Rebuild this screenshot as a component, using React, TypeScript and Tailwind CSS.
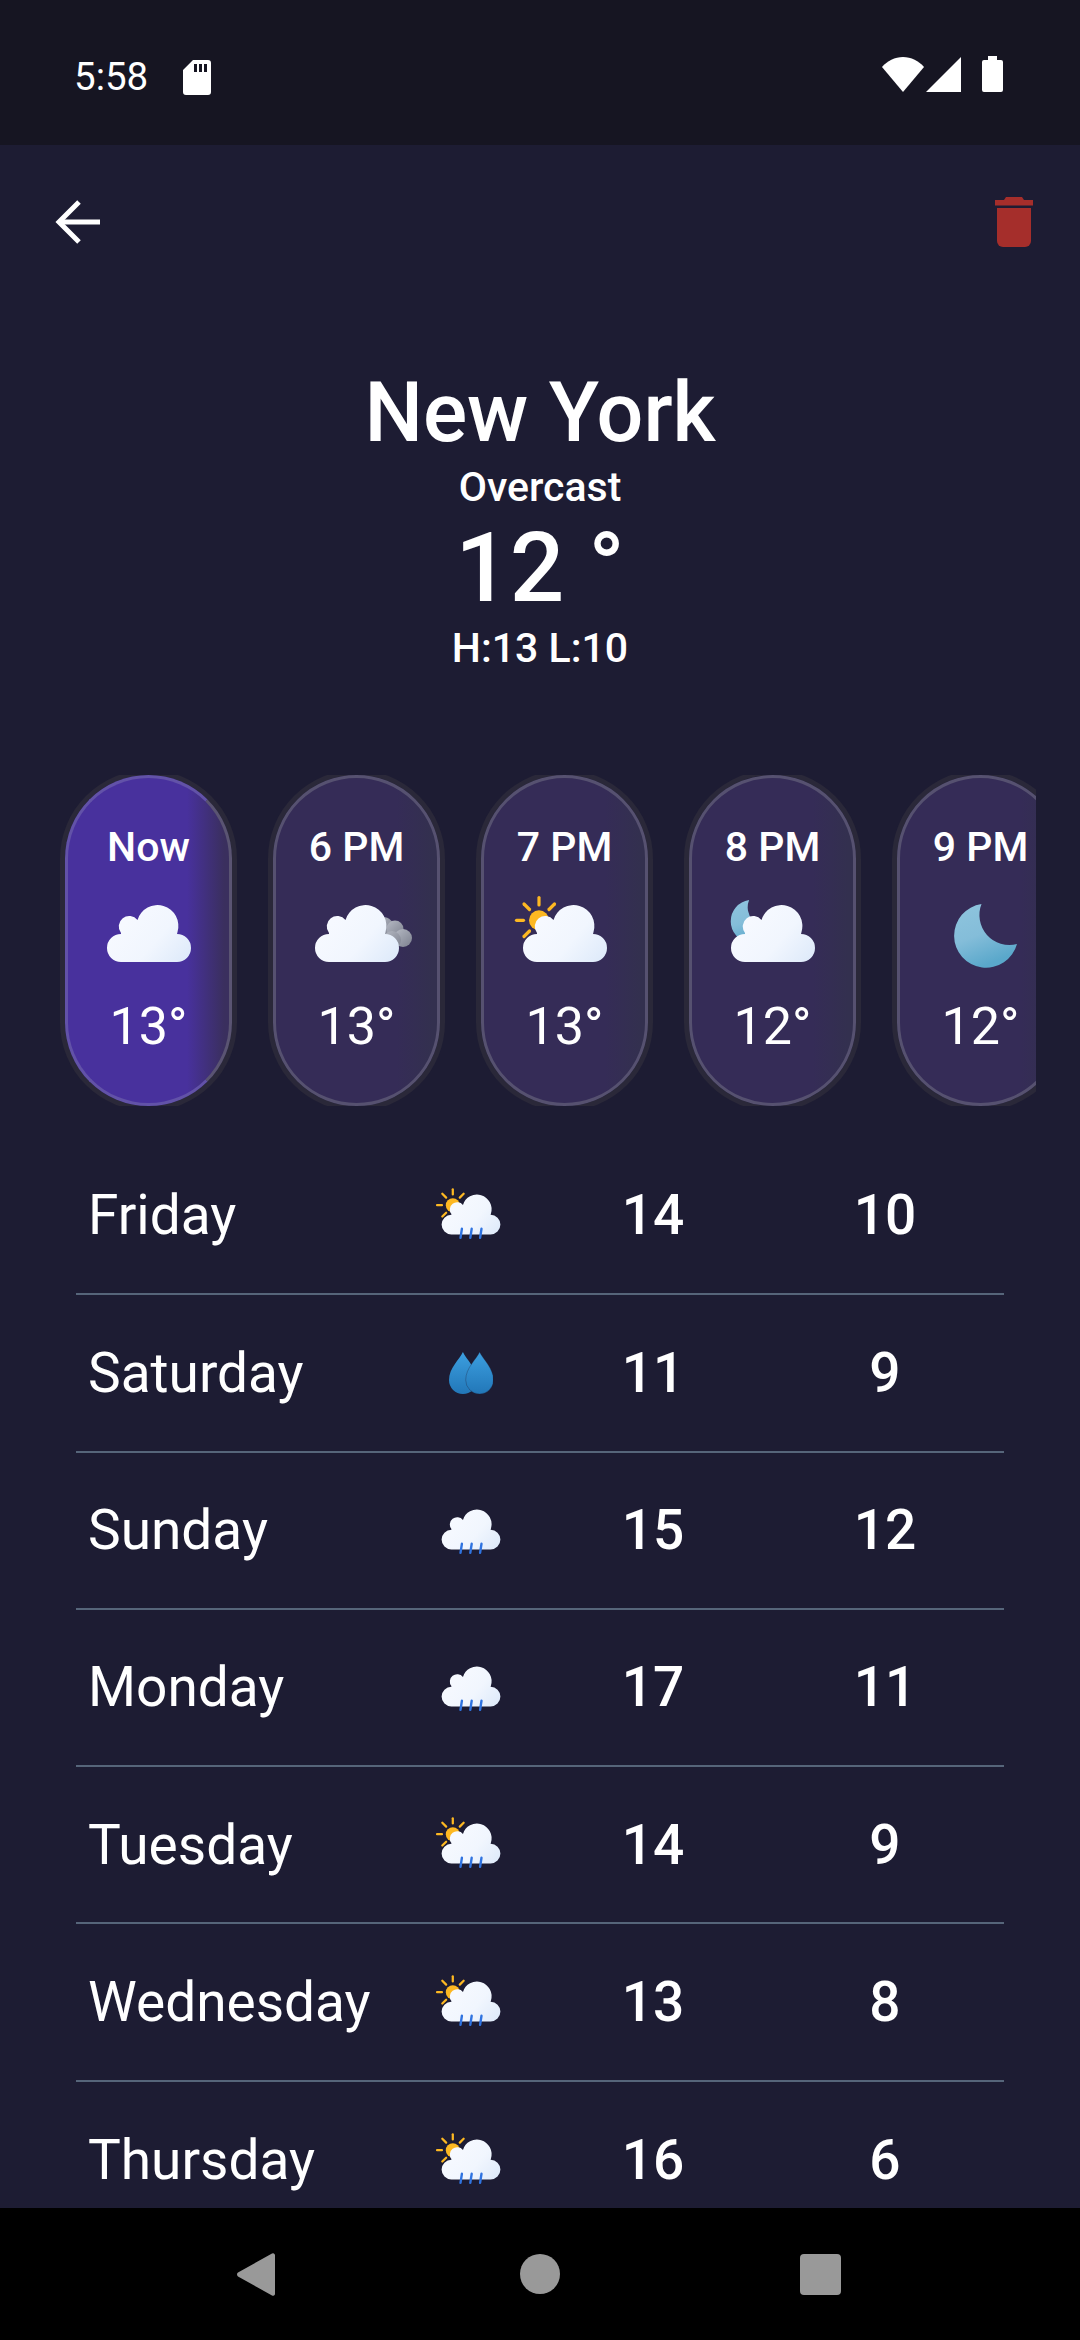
import { useId } from 'react';

type IconKind = 'cloud' | 'overcast' | 'sunCloud' | 'moonCloud' | 'moon' | 'sunRain' | 'rain' | 'drops';

const hours: { label: string; temp: string; icon: IconKind; active?: boolean }[] = [
  { label: 'Now', temp: '13°', icon: 'cloud', active: true },
  { label: '6 PM', temp: '13°', icon: 'overcast' },
  { label: '7 PM', temp: '13°', icon: 'sunCloud' },
  { label: '8 PM', temp: '12°', icon: 'moonCloud' },
  { label: '9 PM', temp: '12°', icon: 'moon' },
];

const days: { name: string; icon: IconKind; high: number; low: number }[] = [
  { name: 'Friday', icon: 'sunRain', high: 14, low: 10 },
  { name: 'Saturday', icon: 'drops', high: 11, low: 9 },
  { name: 'Sunday', icon: 'rain', high: 15, low: 12 },
  { name: 'Monday', icon: 'rain', high: 17, low: 11 },
  { name: 'Tuesday', icon: 'sunRain', high: 14, low: 9 },
  { name: 'Wednesday', icon: 'sunRain', high: 13, low: 8 },
  { name: 'Thursday', icon: 'sunRain', high: 16, low: 6 },
];

const CLOUD = 'M-28 0A14 14 0 0 1-28-28L-28-29A10.5 10.5 0 0 1-11.5-42A20.5 20.5 0 0 1 28.5-30L28-28A14 14 0 0 1 28 0Z';
const MOON = 'M28.5 0A32 32 0 1 0 64 40A30 30 0 0 1 28.5 0Z';

function Sun() {
  return (
    <g>
      <circle cx="-26" cy="-41.7" r="10" fill="#fdb822" />
      <g stroke="#fdb822" strokeWidth="3.2" strokeLinecap="round">
        <path d="M-26-64.5V-57" />
        <path d="M-48.5-41.7H-41.5" />
        <path d="M-41-58L-35.5-52.5" />
        <path d="M-10.5-58L-16-52.5" />
        <path d="M-41-25.5L-35.5-31" />
      </g>
    </g>
  );
}

function Rain() {
  return (
    <g stroke="#2f73e0" strokeWidth="3.4" strokeLinecap="round">
      <path d="M-13-8L-15 5" />
      <path d="M1-8L-1 5" />
      <path d="M15-8L13 5" />
    </g>
  );
}

function WeatherIcon({ kind, small }: { kind: IconKind; small?: boolean }) {
  const id = useId();
  const size = small ? 'w-[84px] h-[63px]' : 'w-[120px] h-[90px]';

  if (kind === 'drops') {
    const drop = 'M13.9 0C17 7 27.8 16 27.8 28A13.9 14 0 0 1 0 28C0 16 10.800 7 13.9 0Z';
    return (
      <svg viewBox="0 0 44.500 42" className="w-[44.500px] h-[42px]">
        <defs>
          <linearGradient id={id} x1="0" y1="0" x2="0" y2="1">
            <stop offset="0" stopColor="#3c9fe0" />
            <stop offset="1" stopColor="#2277b8" />
          </linearGradient>
        </defs>
        <path d={drop} fill={`url(#${id})`} />
        <path d={drop} fill={`url(#${id})`} stroke="#1d1c33" strokeWidth="0.3" transform="translate(16.700 0)" />
      </svg>
    );
  }

  const hasCloud = kind !== 'moon';
  return (
    <svg viewBox="-60 -72 120 90" className={size}>
      <defs>
        <linearGradient id={id} gradientUnits="userSpaceOnUse" x1="-20" y1="-45" x2="35" y2="2">
          <stop offset="0" stopColor="#f6f9ff" />
          <stop offset="0.5" stopColor="#f1f6fe" />
          <stop offset="1" stopColor="#deeafa" />
        </linearGradient>
        <linearGradient id={`${id}m`} x1="0" y1="0" x2="0.4" y2="1">
          <stop offset="0" stopColor="#8fc5de" />
          <stop offset="0.55" stopColor="#84bdd9" />
          <stop offset="1" stopColor="#5aa8cb" />
        </linearGradient>
        <linearGradient id={`${id}g`} x1="0" y1="0" x2="1" y2="1">
          <stop offset="0" stopColor="#b6bac4" />
          <stop offset="1" stopColor="#7c808e" />
        </linearGradient>
      </defs>
      {kind === 'overcast' && (
        <g fill={`url(#${id}g)`}>
          <circle cx="26" cy="-34" r="11" />
          <circle cx="38" cy="-33" r="8.500" />
          <circle cx="46" cy="-24" r="9" />
          <circle cx="35" cy="-22" r="9" />
        </g>
      )}
      {(kind === 'sunCloud' || kind === 'sunRain') && <Sun />}
      {kind === 'moonCloud' && <path d={MOON} fill={`url(#${id}m)`} transform="translate(-43 -62) scale(0.67)" />}
      {kind === 'moon' && <path d={MOON} fill={`url(#${id}m)`} transform="translate(-28 -58)" />}
      {hasCloud && <path d={CLOUD} fill={`url(#${id})`} />}
      {(kind === 'sunRain' || kind === 'rain') && <Rain />}
    </svg>
  );
}

function HourCard({ label, temp, icon, active }: { label: string; temp: string; icon: IconKind; active?: boolean }) {
  return (
    <div
      className={`shrink-0 w-[167px] h-[331px] rounded-full border-[3px] shadow-[0_0_0_5px_#2a2839] flex flex-col items-center pt-[47px] ${
        active
          ? 'border-[#6252a8] border-r-[#5a5472] bg-[linear-gradient(90deg,#48319d_74%,#3a2f5e_97%)]'
          : 'border-[#565170] bg-[linear-gradient(90deg,#352c57_75%,#33304f_97%)]'
      }`}
    >
      <span className="text-[41px] leading-[44px] font-medium">{label}</span>
      <div className="mt-[21px]">
        <WeatherIcon kind={icon} />
      </div>
      <span className="mt-[18px] text-[52px] leading-[58px] font-normal">{temp}</span>
    </div>
  );
}

function DayRow({ name, icon, high, low }: { name: string; icon: IconKind; high: number; low: number }) {
  return (
    <div className="h-[157.300px] shrink-0 mx-[76px] border-b-2 border-[#56657a] grid grid-cols-[340px_110px_254px_210px] items-center last:border-b-0">
      <span className="pl-3 text-[55px] font-normal">{name}</span>
      <div className="flex justify-center">
        <WeatherIcon kind={icon} small />
      </div>
      <span className="text-center text-[55px] font-medium">{high}</span>
      <span className="text-center text-[55px] font-medium">{low}</span>
    </div>
  );
}

export default function App() {
  return (
    <div className="w-[1080px] h-[2340px] overflow-hidden flex flex-col bg-[#1d1c33] text-white font-['Roboto',sans-serif]">
      {/* status bar */}
      <div className="h-[145px] shrink-0 bg-[#161522] flex items-start justify-between pl-[74px] pr-[77px] pt-[56px]">
        <div className="flex items-center gap-[35px]">
          <span className="text-[38.500px] leading-[42px]">5:58</span>
          <svg viewBox="0 0 28 35" className="w-[28px] h-[35px]" fill="#fff">
            <path
              fillRule="evenodd"
              d="M10 0H25A3 3 0 0 1 28 3V32A3 3 0 0 1 25 35H3A3 3 0 0 1 0 32V10ZM11 4V12H14V4ZM16 4V12H19V4ZM21 4V12H24V4Z"
            />
          </svg>
        </div>
        <div className="flex items-center gap-[2px]">
          <svg viewBox="0 0 42 35" className="w-[42px] h-[35px]" fill="#fff">
            <path d="M21 35L0 10C5 4 13 0 21 0S37 4 42 10Z" />
          </svg>
          <svg viewBox="0 0 35 35" className="w-[35px] h-[35px] mr-[19px]" fill="#fff">
            <path d="M35 0V35H0Z" />
          </svg>
          <svg viewBox="0 0 21 36" className="w-[21px] h-[36px]" fill="#fff">
            <path d="M6 0H15V4H19A2 2 0 0 1 21 6V34A2 2 0 0 1 19 36H2A2 2 0 0 1 0 34V6A2 2 0 0 1 2 4H6Z" />
          </svg>
        </div>
      </div>

      <div className="flex-1 min-h-0 overflow-hidden flex flex-col">
        {/* toolbar */}
        <div className="shrink-0 flex justify-between items-center pl-[55px] pr-[47px] pt-[52px]">
          <svg viewBox="0 0 45 44" className="w-[45px] h-[44px]" fill="none" stroke="#fff" strokeWidth="5">
            <path d="M45 22H4" />
            <path d="M24 2L4 22L24 42" />
          </svg>
          <svg viewBox="0 0 38 50" className="w-[38px] h-[50px]" fill="#a52e2b">
            <path d="M11 0H27L29 3H38V8.500H0V3H9Z" />
            <path d="M2 11H36V44A6 6 0 0 1 30 50H8A6 6 0 0 1 2 44Z" />
          </svg>
        </div>

        {/* current conditions */}
        <div className="shrink-0 flex flex-col items-center mt-[117px]">
          <h1 className="text-[82.500px] leading-[98px] font-medium">New York</h1>
          <p className="text-[41px] leading-[44px] font-medium mt-[3px]">Overcast</p>
          <p className="text-[96px] leading-[112px] font-medium mt-[3px]">12 °</p>
          <p className="text-[41px] leading-[44px] font-medium mt-[2px]">H:13 L:10</p>
        </div>

        {/* hourly strip */}
        <div className="shrink-0 ml-[60px] w-[976px] mt-[105px] overflow-hidden pl-[5px] flex gap-[41px]">
          {hours.map((h) => (
            <HourCard key={h.label} {...h} />
          ))}
        </div>

        {/* week */}
        <div className="shrink-0 flex flex-col mt-[32px]">
          {days.map((d) => (
            <DayRow key={d.name} {...d} />
          ))}
        </div>
      </div>

      {/* nav bar */}
      <div className="h-[132px] shrink-0 bg-black relative">
        <svg viewBox="0 0 38 45" className="absolute left-[237px] top-[44px] w-[38px] h-[45px]" fill="#999">
          <path d="M35 1.500A2 2 0 0 1 38 3V42A2 2 0 0 1 35 43.500L1 24.500A2.500 2.500 0 0 1 1 20.500Z" />
        </svg>
        <div className="absolute left-[520px] top-[46px] w-[40px] h-[40px] rounded-full bg-[#999]" />
        <div className="absolute left-[800px] top-[46px] w-[41px] h-[41px] rounded-[4px] bg-[#999]" />
      </div>
    </div>
  );
}
